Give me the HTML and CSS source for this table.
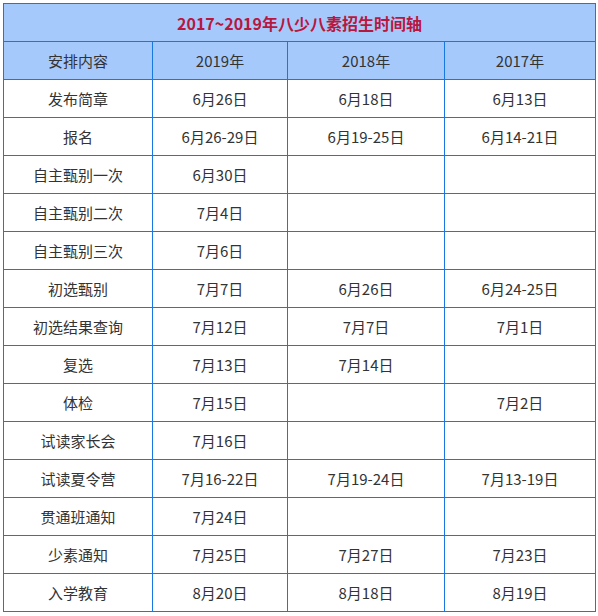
FILE: index.html
```html
<!DOCTYPE html>
<html lang="zh">
<head>
<meta charset="utf-8">
<link rel="stylesheet" href="styles.css">
</head>
<body>
<table class="timeline">
  <colgroup>
    <col class="c1"><col class="c2"><col class="c3"><col class="c4">
  </colgroup>
  <tr class="title-row"><td colspan="4">2017~2019年八少八素招生时间轴</td></tr>
  <tr class="head-row"><td>安排内容</td><td>2019年</td><td>2018年</td><td>2017年</td></tr>
  <tr><td>发布简章</td><td>6月26日</td><td>6月18日</td><td>6月13日</td></tr>
  <tr><td>报名</td><td>6月26-29日</td><td>6月19-25日</td><td>6月14-21日</td></tr>
  <tr><td>自主甄别一次</td><td>6月30日</td><td></td><td></td></tr>
  <tr><td>自主甄别二次</td><td>7月4日</td><td></td><td></td></tr>
  <tr><td>自主甄别三次</td><td>7月6日</td><td></td><td></td></tr>
  <tr><td>初选甄别</td><td>7月7日</td><td>6月26日</td><td>6月24-25日</td></tr>
  <tr><td>初选结果查询</td><td>7月12日</td><td>7月7日</td><td>7月1日</td></tr>
  <tr><td>复选</td><td>7月13日</td><td>7月14日</td><td></td></tr>
  <tr><td>体检</td><td>7月15日</td><td></td><td>7月2日</td></tr>
  <tr><td>试读家长会</td><td>7月16日</td><td></td><td></td></tr>
  <tr><td>试读夏令营</td><td>7月16-22日</td><td>7月19-24日</td><td>7月13-19日</td></tr>
  <tr><td>贯通班通知</td><td>7月24日</td><td></td><td></td></tr>
  <tr><td>少素通知</td><td>7月25日</td><td>7月27日</td><td>7月23日</td></tr>
  <tr><td>入学教育</td><td>8月20日</td><td>8月18日</td><td>8月19日</td></tr>
</table>
</body>
</html>
```
FILE: styles.css
```css
html, body {
  margin: 0;
  padding: 0;
  background: #fff;
}
body {
  padding: 3px 0 0 3px;
  font-family: "Noto Sans CJK SC", "Noto Sans", sans-serif;
}
.timeline {
  border-collapse: collapse;
  table-layout: fixed;
  width: 592px;
}
.c1 { width: 149px; }
.c2 { width: 135px; }
.c3 { width: 157px; }
.c4 { width: 151px; }
.timeline td {
  border: 1px solid #1877e0;
  height: 37px;
  padding: 0;
  text-align: center;
  vertical-align: middle;
  font-size: 15px;
  color: #333;
  line-height: 20px;
}
.title-row td {
  background: #a6c9fc;
  color: #b8173e;
  font-weight: bold;
  font-size: 16px;
}
.head-row td {
  background: #a6c9fc;
  color: #333;
}
```
